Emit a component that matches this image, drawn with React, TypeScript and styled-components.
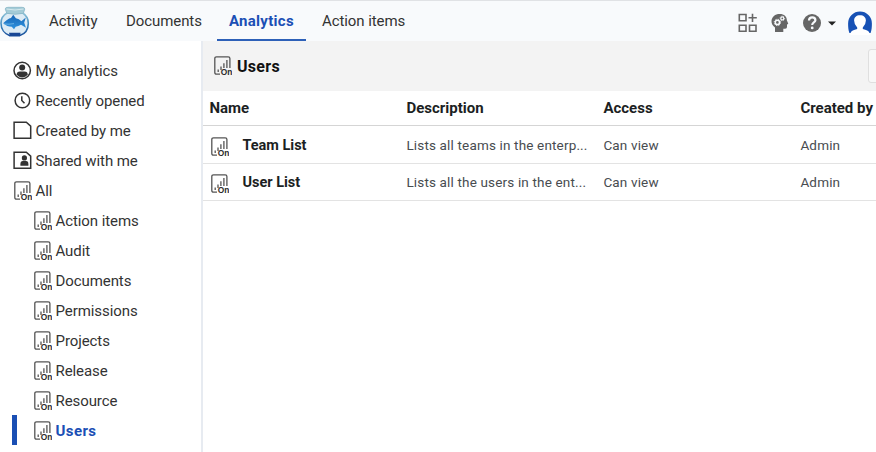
import React from 'react';
import styled, { createGlobalStyle } from 'styled-components';

const GlobalStyle = createGlobalStyle`
  * { box-sizing: border-box; }
  body { margin: 0; overflow: hidden; background: #fff; font-family: Roboto, sans-serif; }
`;

const Page = styled.div`
  display: flex;
  flex-direction: column;
  width: 876px;
  height: 452px;
  overflow: hidden;
  color: #333;
  font-size: 15px;
`;

const TopBar = styled.header`
  display: flex;
  flex: none;
  height: 41px;
  border-top: 1px solid #e0e2e5;
  background: #f8fafc;
`;

const LogoBox = styled.div`
  width: 37px;
  flex: none;
  padding-top: 5px;
  svg { display: block; }
`;

const Nav = styled.nav`
  display: flex;
  flex: 1;
`;

const Tab = styled.a<{ $width: number; $active?: boolean }>`
  width: ${(p) => p.$width}px;
  height: 40px;
  padding: 0 0 0 12px;
  line-height: 40px;
  white-space: nowrap;
  color: ${(p) => (p.$active ? '#1b4fb5' : '#333')};
  font-weight: ${(p) => (p.$active ? 700 : 400)};
  letter-spacing: ${(p) => (p.$active ? 0.28 : -0.08)}px;
  box-shadow: ${(p) => (p.$active ? 'inset 0 -2px #2d60b8' : 'none')};
`;

const Spacer = styled.div<{ $width: number }>`
  flex: none;
  width: ${(p) => p.$width}px;
`;

const Tools = styled.div`
  display: flex;
  align-items: flex-start;
  width: 138px;
  flex: none;
  padding-top: 12px;
  svg { display: block; flex: none; }
`;

const HelpMenu = styled.div`
  display: flex;
  align-items: center;
  gap: 7px;
  margin: 0 12px 0 14px;
`;

const HeadIcon = styled.div`
  margin-left: 13px;
`;

const Avatar = styled.div`
  margin-top: -2px;
`;

const Body = styled.div`
  display: flex;
  flex: 1;
  min-height: 0;
`;

const Sidebar = styled.aside`
  flex: none;
  width: 203px;
  padding: 14px 0 0 12px;
  border-right: 2px solid #e7ebf1;
`;

const SideItem = styled.div<{ $nested?: boolean; $active?: boolean }>`
  display: flex;
  align-items: center;
  height: 30px;
  padding-left: ${(p) => (p.$nested ? 20 : 0)}px;
  color: ${(p) => (p.$active ? '#1b4fb5' : '#333')};
  font-weight: ${(p) => (p.$active ? 700 : 400)};
  letter-spacing: ${(p) => (p.$active ? 0.4 : -0.08)}px;
  box-shadow: ${(p) => (p.$active ? 'inset 5px 0 #1a4fb4' : 'none')};
`;

const SideIcon = styled.span`
  display: flex;
  justify-content: flex-end;
  flex: none;
  width: 19.5px;
  margin-right: 4px;
  padding-top: 1px;
`;

const SideLabel = styled.span`
  padding-top: 2px;
`;

const Main = styled.main`
  flex: 1;
  min-width: 0;
`;

const Heading = styled.div`
  display: flex;
  height: 50px;
  padding-left: 11px;
  background: #f3f3f3;
`;

const Title = styled.h1`
  display: flex;
  align-items: center;
  gap: 5px;
  flex: 1;
  margin: 0;
  color: #111;
  font-size: 16px;
  letter-spacing: 0.3px;
`;

const HeadingButton = styled.button`
  flex: none;
  width: 40px;
  height: 34px;
  margin: 8px -32px 0 0;
  border: 1px solid #dfdfdf;
  border-radius: 3px;
  background: #f8f8f8;
`;

const Table = styled.div`
  display: grid;
  grid-template-rows: 35px 38px 37px;
`;

const TableRow = styled.div<{ $header?: boolean }>`
  display: grid;
  grid-template-columns: 197px 197px 197px 76px;
  align-items: center;
  padding-left: 6.4px;
  border-bottom: 1px solid ${(p) => (p.$header ? '#d5d5d5' : '#e3e3e3')};
`;

const HeadCell = styled.div`
  color: #1c1f23;
  font-size: 15px;
  font-weight: 700;
  white-space: nowrap;
`;

const NameCell = styled.div`
  display: flex;
  align-items: center;
  gap: 13px;
  padding: 1px 0 0 2px;
  color: #1c1f23;
  font-size: 14.5px;
  font-weight: 700;
  svg { margin-top: 3px; flex: none; }
`;

const Cell = styled.div`
  color: #484c50;
  font-size: 13.5px;
  letter-spacing: 0.16px;
  white-space: nowrap;
`;

const ReportIcon = () => (
  <svg width="18" height="20" viewBox="0 0 18 20" fill="none" stroke="#555" strokeWidth="1.3">
    <path d="M6 18.2H2.5Q.8 18.2.8 16.5V2.5Q.8.8 2.5.8H14.2Q15.9.8 15.9 2.5V12" />
    <path d="M4.2 13.5V16M7 10.5V14M9.9 7.3V12M12.9 4V12" />
    <text x="6.7" y="19.2" fill="#2b2b2b" stroke="none" fontFamily="Liberation Sans, sans-serif" fontSize="8.4" fontWeight="700" letterSpacing="0">On</text>
  </svg>
);

const PersonIcon = () => (
  <svg width="19" height="19" viewBox="0 0 19 19">
    <circle cx="9.2" cy="9.5" r="8.2" fill="none" stroke="#333" strokeWidth="1.5" />
    <circle cx="9.2" cy="6.6" r="3" fill="#333" />
    <path d="M3.6 13.8Q3.7 10.4 6.9 10.4H11.5Q14.7 10.4 14.8 13.8Q12.4 16.4 9.2 16.4T3.6 13.8Z" fill="#333" />
  </svg>
);

const ClockIcon = () => (
  <svg width="19" height="19" viewBox="0 0 19 19" fill="none" stroke="#333" strokeWidth="1.5">
    <circle cx="9.4" cy="9.5" r="7.3" />
    <path d="M8.8 5.3V9.4L11.5 12.2" />
  </svg>
);

const PageIcon = ({ shared = false }: { shared?: boolean }) => (
  <svg width="19" height="19" viewBox="0 0 19 19">
    <path d="M1.1 1.3H13.3L17.7 5.1V17.3H1.1Z" fill="none" stroke="#333" strokeWidth="1.5" />
    {shared && (
      <>
        <circle cx="11.4" cy="6.9" r="2.6" fill="#333" />
        <path d="M7.4 13.2Q7.4 10.1 9.8 10.1H13Q15.4 10.1 15.4 13.2V14.7H7.4Z" fill="#333" />
      </>
    )}
  </svg>
);

const FishbowlLogo = () => (
  <svg width="30" height="32" viewBox="0 0 30 32">
    <defs>
      <linearGradient id="glass" x1="0" y1="0" x2="0" y2="1">
        <stop offset="0" stopColor="#8fc3d8" />
        <stop offset="0.55" stopColor="#3a86bd" />
        <stop offset="1" stopColor="#194e9b" />
      </linearGradient>
      <linearGradient id="fish" x1="0" y1="0" x2="0" y2="1">
        <stop offset="0" stopColor="#1765b5" />
        <stop offset="1" stopColor="#2e93df" />
      </linearGradient>
    </defs>
    <path d="M7 7C2.5 9.5 1 13.5 1 17.2C1 23 4.5 27.8 9.5 29.6H19.8C25 27.8 28.3 23 28.3 17.2C28.3 13 26.5 9.5 22.8 7Z" fill="#dcebf5" stroke="url(#glass)" strokeWidth="1.6" />
    <path d="M5.2 3Q5.2 1.3 8 1.3H22Q24.8 1.3 24.8 3L23.4 7.3Q15 9.3 6.8 7.3Z" fill="#a3cbd7" stroke="#82b1c3" strokeWidth=".7" />
    <path d="M6.5 3Q15 5 23.5 3" fill="none" stroke="#d5e8ed" strokeWidth="1" />
    <path d="M3.2 17.2Q7.5 12.8 11 12L13.2 8.8L15.9 12.2Q19 12.7 21.4 15.2L25.8 11.6L24.2 16.8L26 21.7L21 18.8Q18.4 20.5 15.7 20.8L14 23.2L11.7 20.8Q7.2 20.8 3.2 17.2Z" fill="url(#fish)" />
    <path d="M4 18Q9 18.6 14 17.6" fill="none" stroke="#79bce9" strokeWidth=".8" />
    <path d="M9 26.7H20.6L19.8 29.8H9.8Z" fill="#174695" />
  </svg>
);

const AppsIcon = () => (
  <svg width="20" height="20" viewBox="0 0 20 20" fill="none" stroke="#666" strokeWidth="1.6">
    <path d="M1.3 1.5H8V7.8H1.3ZM1.3 12.2H8V18.3H1.3ZM11.5 12.2H18V18.3H11.5ZM14.5 .7V9M10.5 4.8H18.8" />
  </svg>
);

const GearHeadIcon = () => (
  <svg width="18" height="20" viewBox="0 0 18 20">
    <path d="M4 19V14.4C1.5 12.7.4 10.6.5 8C.8 3.6 4 .9 8.7.9C13.3.9 15.8 3.4 15.9 7.4L17.2 10.6Q17.5 11.3 16 11.6V14Q16 15.8 14.2 15.8H12.3V19Z" fill="#666" />
    <g fill="none" stroke="#f8fafc">
      <circle cx="6.4" cy="9.4" r="2.1" strokeWidth="1.5" />
      <circle cx="6.4" cy="9.4" r="3.2" strokeWidth="1" strokeDasharray="1.26 1.25" />
      <circle cx="11.3" cy="5.4" r="1.5" strokeWidth="1.2" />
      <circle cx="11.3" cy="5.4" r="2.3" strokeWidth=".8" strokeDasharray=".9 .9" />
    </g>
  </svg>
);

const HelpIcon = () => (
  <svg width="18" height="20" viewBox="0 0 18 20">
    <circle cx="9" cy="10" r="9" fill="#666" />
    <path d="M6 7.5C6.1 5.3 7.3 4.4 9.2 4.4C11.2 4.4 12.4 5.5 12.4 7.2C12.4 9.5 9.2 9.4 9.2 12" fill="none" stroke="#f8fafc" strokeWidth="2.2" />
    <circle cx="9.2" cy="14.9" r="1.4" fill="#f8fafc" />
  </svg>
);

const CaretIcon = () => (
  <svg width="8" height="5" viewBox="0 0 8 5">
    <path d="M0 .5H8L4 4.6Z" fill="#222" />
  </svg>
);

const AvatarIcon = () => (
  <svg width="24" height="24" viewBox="0 0 24 24">
    <path d="M1.4 22C.3 19 .1 16 .1 12.5A11.9 11.9 0 0 1 23.9 12.5C23.9 16 23.7 19 22.6 22Z" fill="#1751b5" />
    <path d="M2.2 24Q2.2 19.6 6.8 18.8L9.2 18V16.5Q6.1 13.6 6.1 9.6C6.1 6.2 8.4 4.2 12 4.2S17.9 6.2 17.9 9.6Q17.9 13.6 14.8 16.5V18L17.2 18.8Q21.8 19.6 21.8 24Z" fill="#fff" />
  </svg>
);

const views = [
  { label: 'My analytics', icon: <PersonIcon /> },
  { label: 'Recently opened', icon: <ClockIcon /> },
  { label: 'Created by me', icon: <PageIcon /> },
  { label: 'Shared with me', icon: <PageIcon shared /> },
  { label: 'All', icon: <ReportIcon /> },
];

const folders = ['Action items', 'Audit', 'Documents', 'Permissions', 'Projects', 'Release', 'Resource', 'Users'];

const reports = [
  { name: 'Team List', description: 'Lists all teams in the enterp...', access: 'Can view', author: 'Admin' },
  { name: 'User List', description: 'Lists all the users in the ent...', access: 'Can view', author: 'Admin' },
];

export default function App() {
  return (
    <>
      <GlobalStyle />
      <Page>
        <TopBar>
          <LogoBox><FishbowlLogo /></LogoBox>
          <Nav>
            <Tab $width={77}>Activity</Tab>
            <Tab $width={103}>Documents</Tab>
            <Tab $width={89} $active>Analytics</Tab>
            <Spacer $width={4} />
            <Tab $width={110}>Action items</Tab>
          </Nav>
          <Tools>
            <AppsIcon />
            <HeadIcon><GearHeadIcon /></HeadIcon>
            <HelpMenu><HelpIcon /><CaretIcon /></HelpMenu>
            <Avatar><AvatarIcon /></Avatar>
          </Tools>
        </TopBar>
        <Body>
          <Sidebar>
            {views.map((view) => (
              <SideItem key={view.label}>
                <SideIcon>{view.icon}</SideIcon>
                <SideLabel>{view.label}</SideLabel>
              </SideItem>
            ))}
            {folders.map((name) => (
              <SideItem key={name} $nested $active={name === 'Users'}>
                <SideIcon><ReportIcon /></SideIcon>
                <SideLabel>{name}</SideLabel>
              </SideItem>
            ))}
          </Sidebar>
          <Main>
            <Heading>
              <Title><ReportIcon />Users</Title>
              <HeadingButton aria-label="More options" />
            </Heading>
            <Table>
              <TableRow $header>
                <HeadCell>Name</HeadCell>
                <HeadCell>Description</HeadCell>
                <HeadCell>Access</HeadCell>
                <HeadCell>Created by</HeadCell>
              </TableRow>
              {reports.map((report) => (
                <TableRow key={report.name}>
                  <NameCell><ReportIcon />{report.name}</NameCell>
                  <Cell>{report.description}</Cell>
                  <Cell>{report.access}</Cell>
                  <Cell>{report.author}</Cell>
                </TableRow>
              ))}
            </Table>
          </Main>
        </Body>
      </Page>
    </>
  );
}
